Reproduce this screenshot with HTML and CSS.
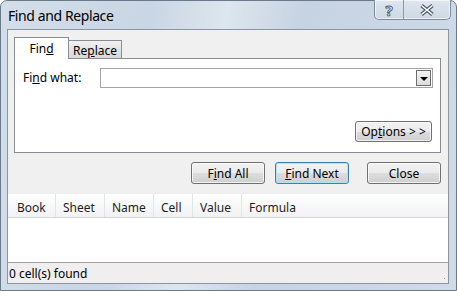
FILE: index.html
```html
<!DOCTYPE html>
<html lang="en">
<head>
    <meta charset="UTF-8">
    <title>Find and Replace</title>
    <link rel="stylesheet" href="styles.css">
</head>
<body>
    <div class="window">
        <div class="titlebar">
            <span class="title">Find and Replace</span>
            <div class="caption-buttons">
                <span class="cap help">?</span>
                <span class="cap close">
                    <svg width="16" height="12" viewBox="0 0 16 12">
                        <path d="M2.5 1.5 L13.5 10.5 M13.5 1.5 L2.5 10.5" stroke="#4a5565" stroke-width="3.6" fill="none"/>
                        <path d="M2.5 1.5 L13.5 10.5 M13.5 1.5 L2.5 10.5" stroke="#ffffff" stroke-width="1.6" fill="none"/>
                    </svg>
                </span>
            </div>
        </div>
        <div class="client">
            <div class="tabs">
                <div class="tab active">Fin<u>d</u></div>
                <div class="tab">Re<u>p</u>lace</div>
            </div>
            <div class="panel">
                <div class="find-row">
                    <label class="label">Fi<u>n</u>d what:</label>
                    <div class="combo">
                        <span class="combo-btn"><span class="arrow"></span></span>
                    </div>
                </div>
                <div class="options-row">
                    <button class="btn options">Op<u>t</u>ions &gt; &gt;</button>
                </div>
            </div>
            <div class="actions">
                <button class="btn">F<u>i</u>nd All</button>
                <button class="btn default"><u>F</u>ind Next</button>
                <button class="btn close-btn">Close</button>
            </div>
            <div class="results">
                <div class="header">
                    <span class="col c-book">Book</span>
                    <span class="col c-sheet">Sheet</span>
                    <span class="col c-name">Name</span>
                    <span class="col c-cell">Cell</span>
                    <span class="col c-value">Value</span>
                    <span class="col c-formula">Formula</span>
                </div>
            </div>
            <div class="status">
                <span>0 cell(s) found</span>
                <span class="grip"></span>
            </div>
        </div>
    </div>
</body>
</html>
```

FILE: styles.css
```css
body {
    margin: 0;
    font-family: "Noto Sans", "DejaVu Sans", sans-serif;
    font-size: 12px;
    color: #000;
    background: #fff;
}
.window {
    width: 457px;
    height: 291px;
    box-sizing: border-box;
    border: 1px solid #6b7a8a;
    border-radius: 7px 7px 0 0;
    padding: 0 7px 6px 6px;
    background: linear-gradient(100deg, #d3dee9 0%, #c9d6e3 30%, #dde6ef 45%, #c6d3e1 60%, #d0dbe7 100%);
}
.titlebar {
    height: 28px;
    display: flex;
    justify-content: space-between;
    align-items: flex-start;
}
.title {
    font-size: 14px;
    line-height: 29px;
    padding-left: 1px;
    letter-spacing: -0.4px;
}
.caption-buttons {
    display: flex;
    margin-top: -1px;
    margin-right: -2px;
    border: 1px solid #7d8b9c;
    border-top: none;
    border-radius: 0 0 5px 5px;
    background: linear-gradient(#dfe7f0, #cdd8e4);
    box-shadow: inset 0 0 0 1px rgba(255, 255, 255, 0.6);
    height: 19px;
}
.cap {
    display: flex;
    align-items: center;
    justify-content: center;
    height: 19px;
}
.help {
    width: 28px;
    border-right: 1px solid #8d9aab;
    font-weight: bold;
    font-size: 15px;
    color: #fff;
    -webkit-text-stroke: 0.9px #4a5565;
}
.close {
    width: 46px;
}
.client {
    height: 253px;
    border: 1px solid #8a96a4;
    background: #f0f0f0;
    display: flex;
    flex-direction: column;
}
.tabs {
    display: flex;
    align-items: flex-end;
    padding: 7px 0 0 6px;
    height: 21px;
    position: relative;
    z-index: 1;
}
.tab {
    height: 18px;
    width: 53px;
    box-sizing: border-box;
    border: 1px solid #898c95;
    border-bottom: none;
    border-left: none;
    background: linear-gradient(#f2f2f2, #e3e3e3 50%, #d9d9d9);
    text-align: center;
    line-height: 19px;
}
.tab.active {
    height: 22px;
    width: 55px;
    border-left: 1px solid #898c95;
    background: #fff;
    margin-bottom: -1px;
    line-height: 22px;
}
.panel {
    height: 95px;
    box-sizing: border-box;
    margin: 0 7px 0 6px;
    border: 1px solid #898c95;
    background: #fff;
    padding: 9px 7px 0 8px;
    display: flex;
    flex-direction: column;
}
.find-row {
    display: flex;
    align-items: center;
    justify-content: space-between;
}
.label {
    line-height: 20px;
}
.combo {
    width: 333px;
    height: 20px;
    box-sizing: border-box;
    border: 1px solid #a4a4a4;
    display: flex;
    justify-content: flex-end;
    align-items: center;
    padding-right: 1px;
}
.combo-btn {
    width: 15px;
    height: 16px;
    box-sizing: border-box;
    border: 1px solid #6d6d6d;
    background: linear-gradient(#f4f4f4, #dcdcdc);
    display: flex;
    align-items: center;
    justify-content: center;
}
.arrow {
    width: 0;
    height: 0;
    border-left: 4px solid transparent;
    border-right: 4px solid transparent;
    border-top: 4px solid #000;
    margin-top: 1px;
}
.options-row {
    display: flex;
    justify-content: flex-end;
    margin-top: 33px;
    padding-right: 1px;
}
.btn {
    font-family: inherit;
    font-size: 12px;
    color: #000;
    height: 22px;
    width: 74px;
    padding: 0;
    border: 1px solid #707070;
    border-radius: 3px;
    background: linear-gradient(#f2f2f2 0%, #ebebeb 50%, #dddddd 51%, #cfcfcf 100%);
    box-shadow: inset 0 0 0 1px rgba(255, 255, 255, 0.7);
}
.btn.options {
    width: 77px;
    height: 21px;
}
.btn.default {
    border-color: #3c7fb1;
    box-shadow: inset 0 0 0 1px #a8e4fb;
}
.actions {
    display: flex;
    justify-content: flex-end;
    gap: 10px;
    margin-top: 9px;
    padding-right: 7px;
}
.actions .close-btn {
    margin-left: 8px;
}
.results {
    margin-top: 10px;
    height: 68px;
    background: #fff;
}
.header {
    display: flex;
    height: 23px;
    border-bottom: 1px solid #d5d5d5;
    background: linear-gradient(#ffffff, #f1f2f4);
}
.col {
    line-height: 23px;
    padding: 2px 0 0 7px;
    box-sizing: border-box;
    border-right: 1px solid #e3e4e6;
    color: #1e1e1e;
}
.c-book { width: 48px; padding-left: 9px; }
.c-sheet { width: 49px; }
.c-name { width: 49px; }
.c-cell { width: 39px; }
.c-value { width: 49px; }
.c-formula { flex: 1; border-right: none; }
.status {
    flex: 1;
    border-top: 1px solid #a0a0a0;
    background: #f0eeee;
    display: flex;
    align-items: center;
    justify-content: space-between;
    padding: 1px 0 0 1px;
}
.grip {
    width: 7px;
    height: 7px;
    align-self: flex-end;
    margin: 0 1px 2px 0;
    background-image: radial-gradient(circle, #a0a0a0 0.8px, transparent 1px);
    background-size: 3px 3px;
    clip-path: polygon(100% 0, 100% 100%, 0 100%);
}
```
